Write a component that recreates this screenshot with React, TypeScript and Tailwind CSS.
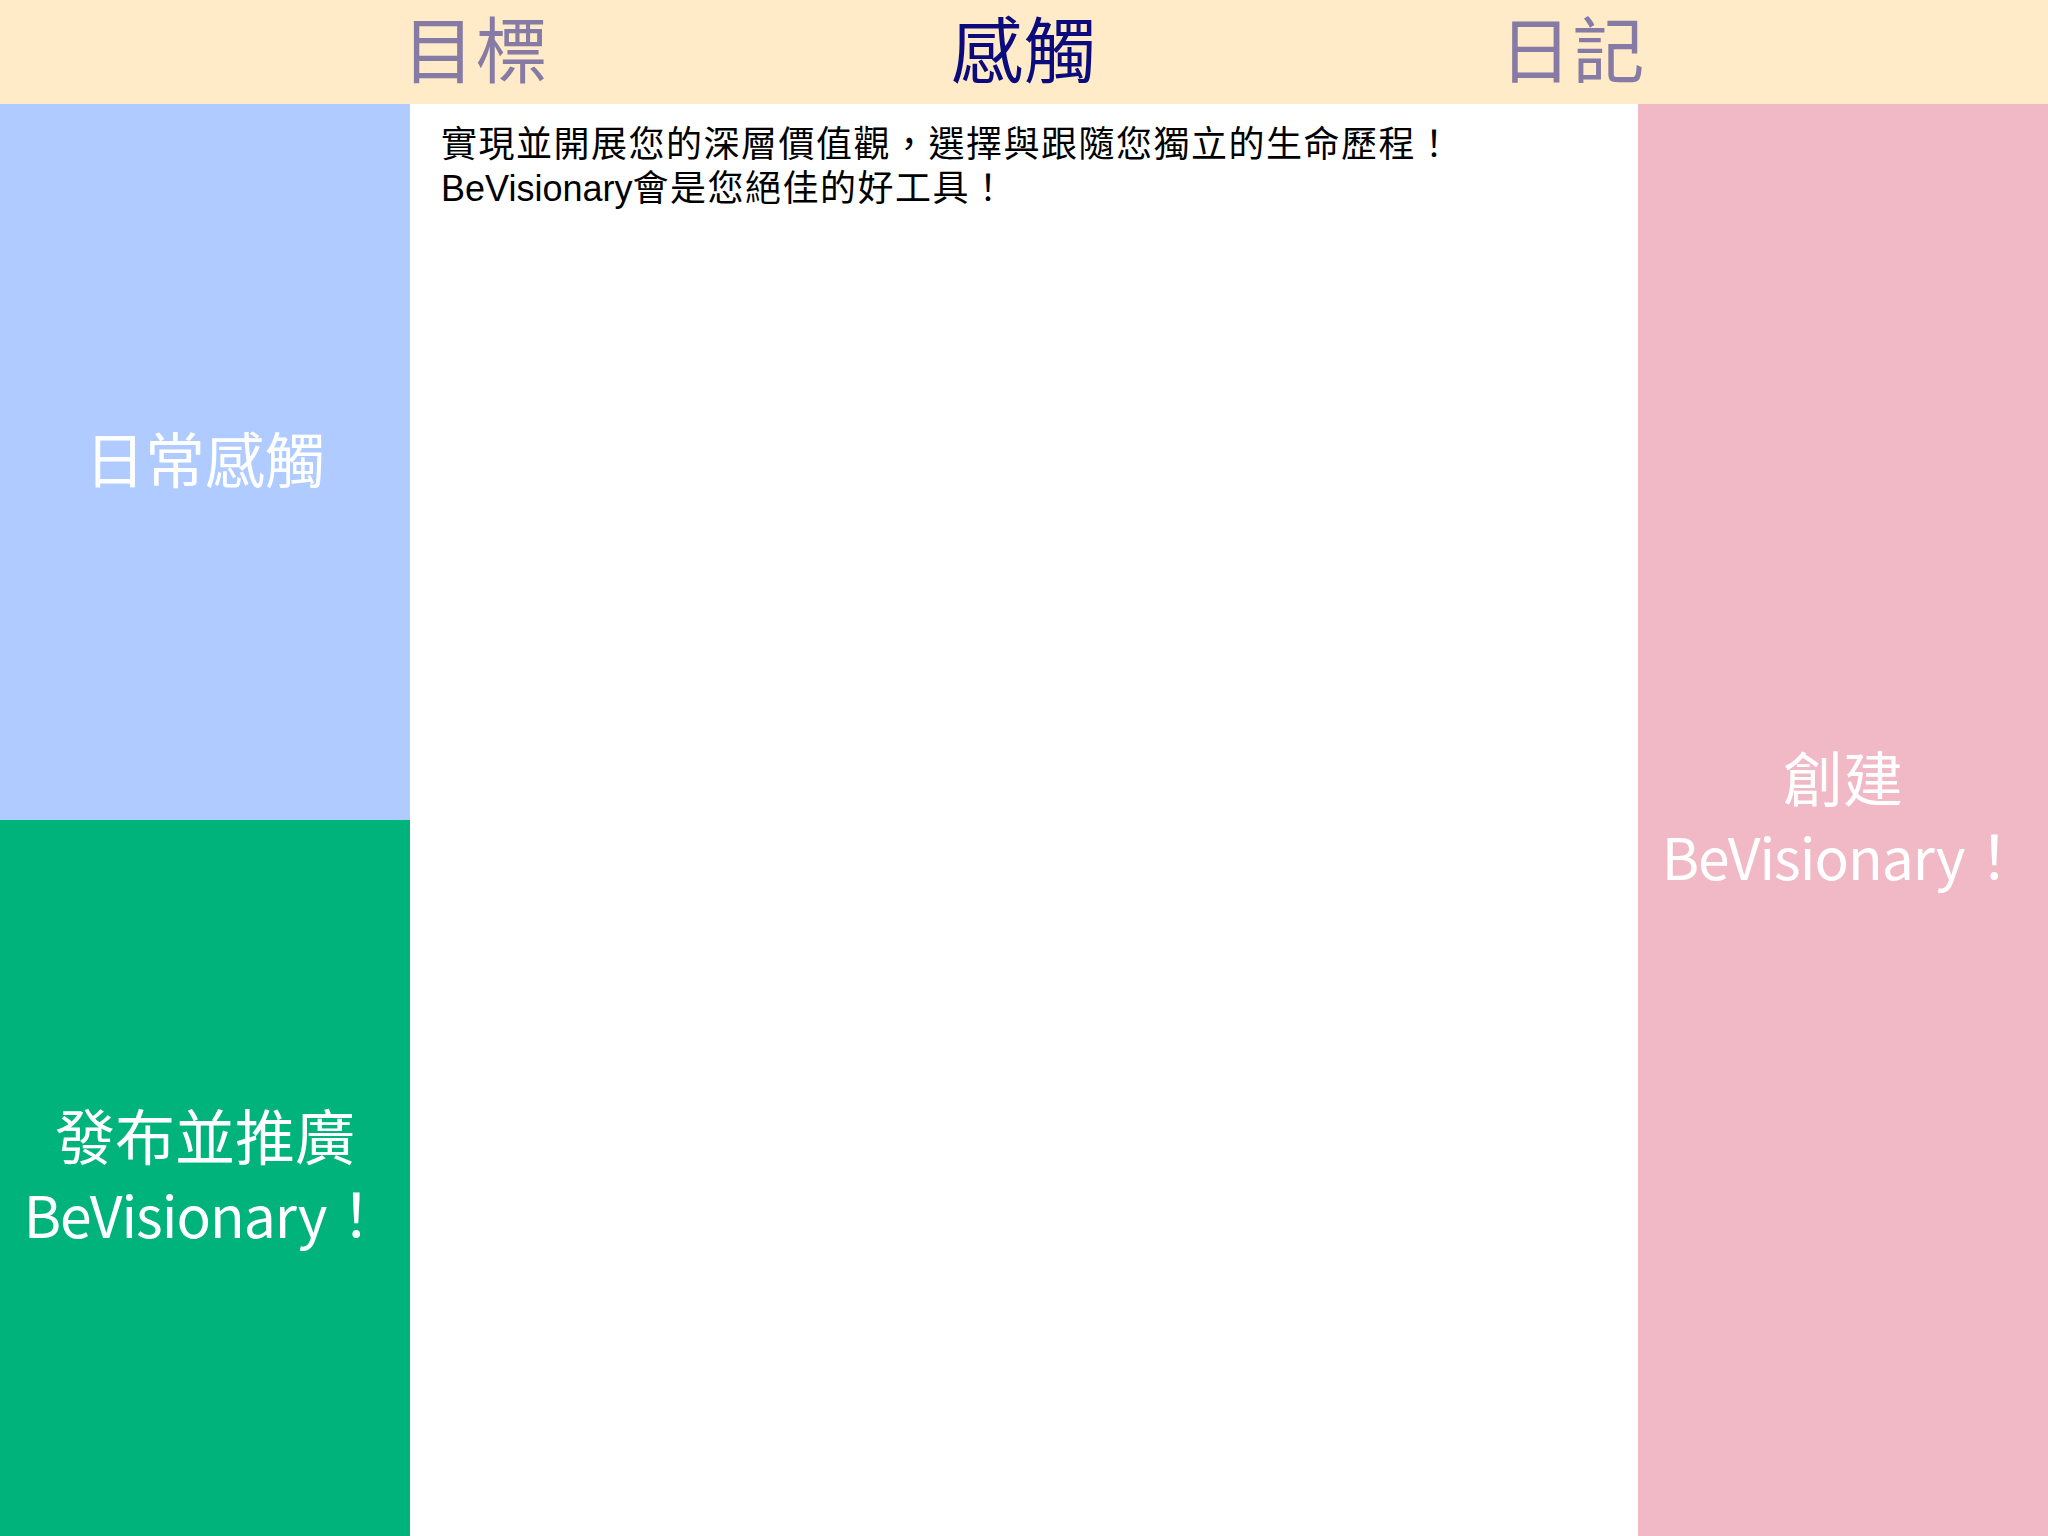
import React from 'react';

const TABS = [
  { key: 'goal', label: '目標', active: false },
  { key: 'touch', label: '感觸', active: true },
  { key: 'diary', label: '日記', active: false },
];

const cjk = 'font-["Noto_Sans_CJK_TC",sans-serif]';

// latin part of the side panel captions runs a little narrower than the CJK font's own latin
function Brand() {
  return (
    <>
      <span className="text-[57px] tracking-[-1px]">BeVisionary</span>！
    </>
  );
}

export default function App() {
  return (
    <div className={`h-screen w-full flex flex-col ${cjk}`}>
      <header className="h-[104px] shrink-0 bg-[#ffebc7] flex items-center justify-evenly pb-[12px]">
        {TABS.map((tab) => (
          <span
            key={tab.key}
            className={
              tab.active
                ? 'text-[72px] leading-[90px] tracking-[1px] text-[#0b0b7d]'
                : 'text-[72px] leading-[90px] tracking-[1px] text-[#857ba4]'
            }
          >
            {tab.label}
          </span>
        ))}
      </header>

      <div className="flex-1 grid grid-cols-[410px_1fr_410px] min-h-0">
        <div className="flex flex-col">
          <div className="flex-1 bg-[#b0cbff] flex items-center justify-center pb-[10px]">
            <span className="text-[60px] leading-[78px] text-white">日常感觸</span>
          </div>
          <div className="flex-1 bg-[#00b37a] flex items-center justify-center pb-[10px]">
            <p className="text-[60px] leading-[78px] text-white text-center">
              發布並推廣
              <br />
              <Brand />
            </p>
          </div>
        </div>

        <main className="bg-white pt-[19px] pl-[31px] pr-4">
          <p className='font-["Liberation_Sans","Noto_Sans_CJK_TC",sans-serif] text-[36px] leading-[44px] text-black'>
            <span className="tracking-[1.5px]">實現並開展您的深層價值觀，選擇與跟隨您獨立的生命歷程！</span>
            <br />
            BeVisionary<span className="tracking-[1.5px]">會是您絕佳的好工具！</span>
          </p>
        </main>

        <div className="bg-[#f1b9c6] flex items-center justify-center pb-[10px]">
          <p className="text-[60px] leading-[78px] text-white text-center">
            創建
            <br />
            <Brand />
          </p>
        </div>
      </div>
    </div>
  );
}
